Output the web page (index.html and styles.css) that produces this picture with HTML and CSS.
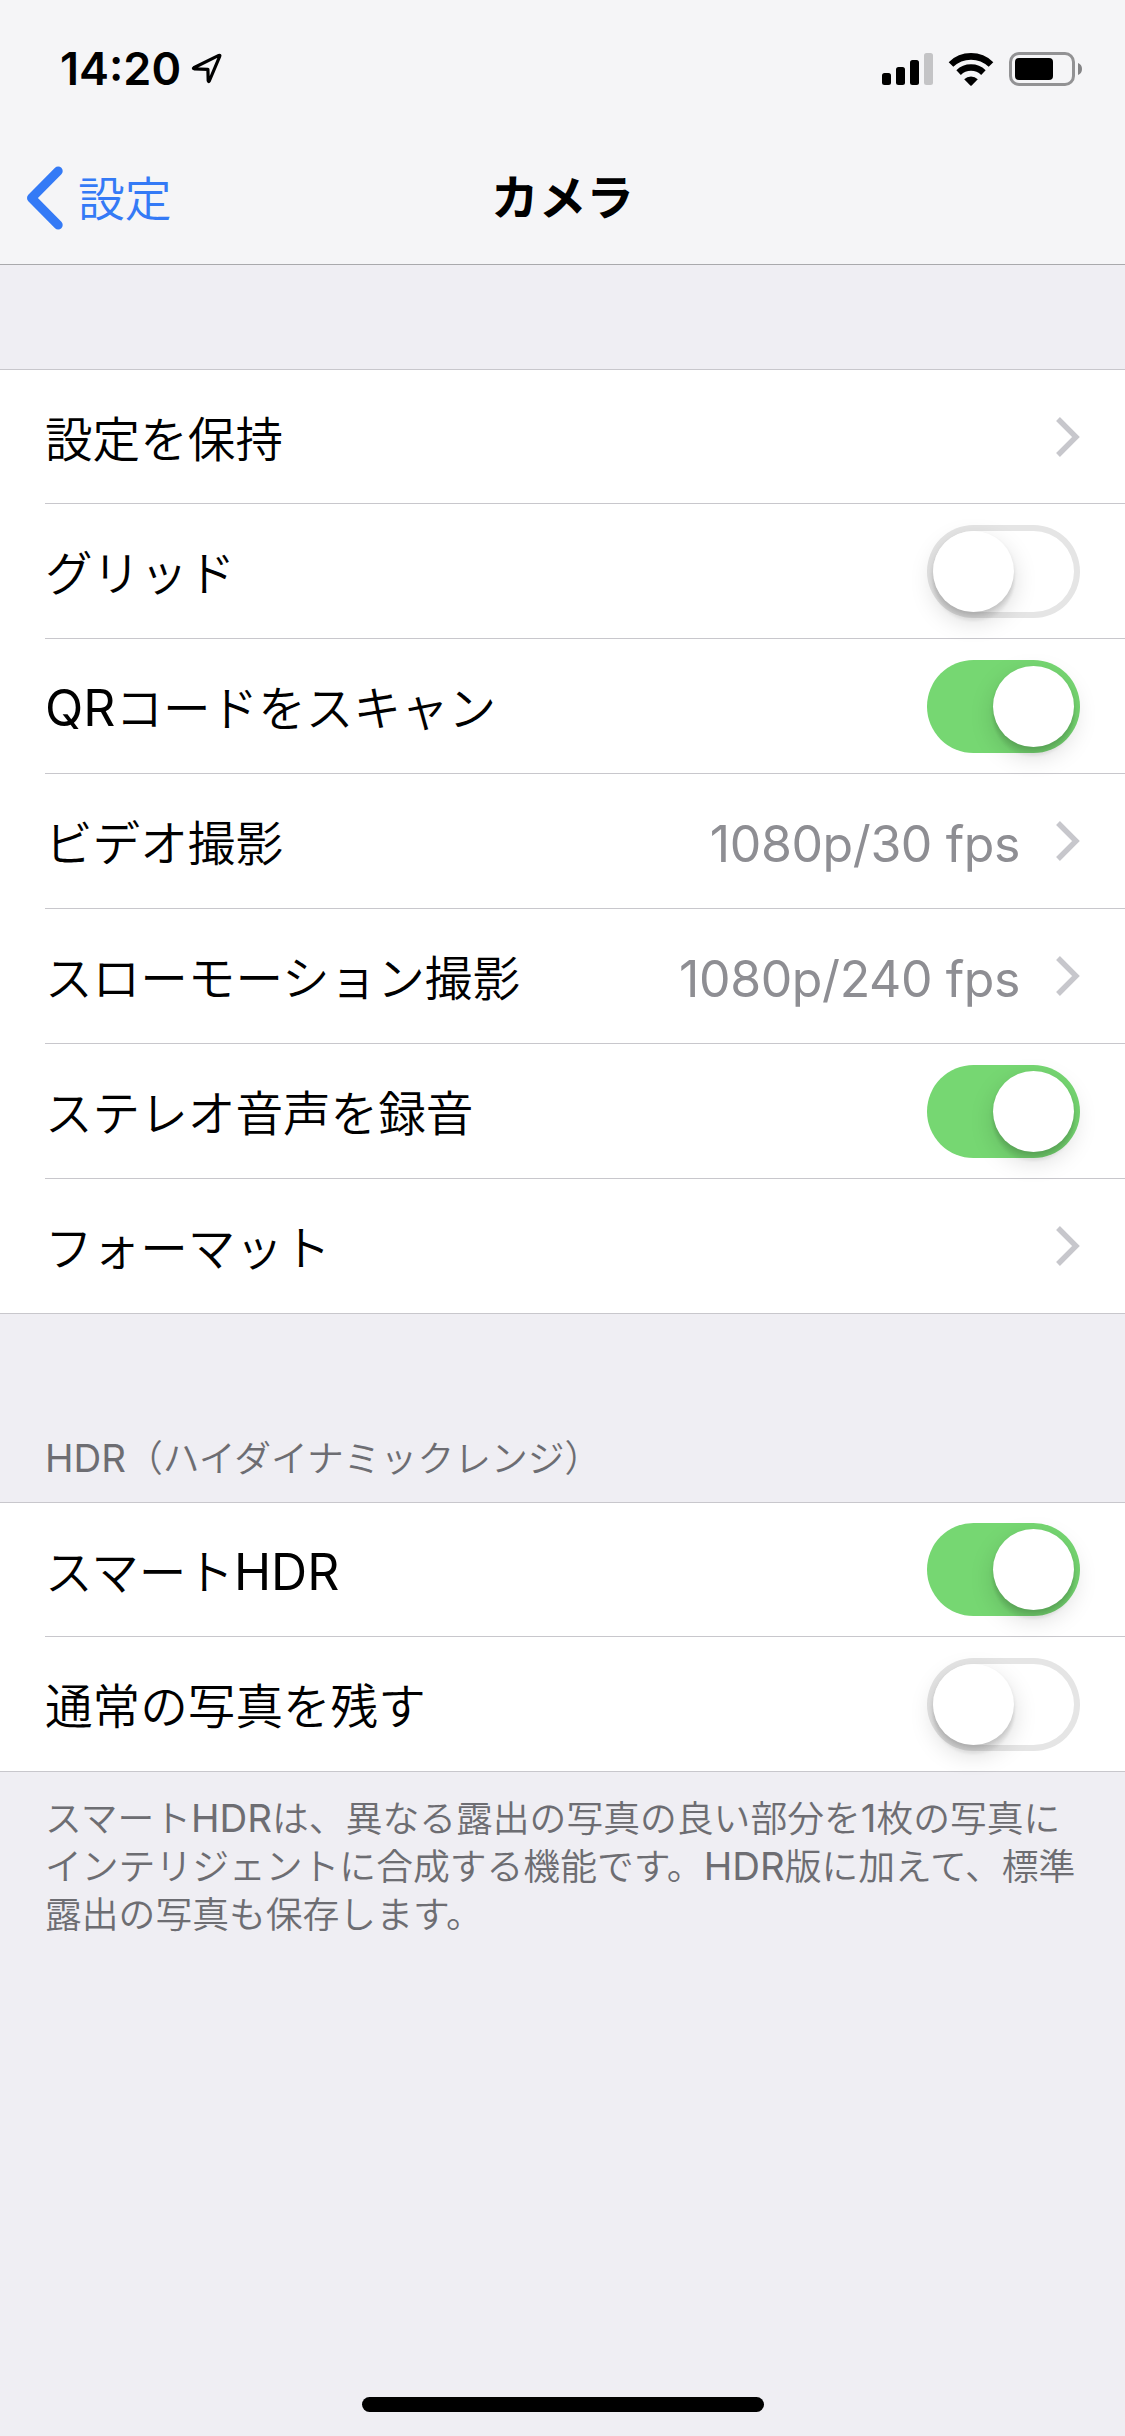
FILE: index.html
```
<!DOCTYPE html>
<html lang="ja">
<head>
    <meta charset="UTF-8">
    <meta name="viewport" content="width=device-width, initial-scale=1.0">
    <title>カメラ</title>
    <link rel="stylesheet" href="styles.css">
</head>
<body>
    <header class="header">
        <div class="status-bar">
            <div class="status-left">
                <span class="time">14:20</span>
                <svg class="location" width="32" height="32" viewBox="0 0 32 32">
                    <path d="M2.8 15.8 L27.8 3.4 Q29.4 2.8 28.7 4.4 L18.3 29 Q17.6 30.2 17.2 28.6 L16.9 17.4 L3.2 16.8 Q1.8 16.4 2.8 15.8 Z" fill="none" stroke="#000" stroke-width="3.2" stroke-linejoin="round"/>
                </svg>
            </div>
            <div class="status-right">
                <svg class="signal" width="51" height="32" viewBox="0 0 51 32">
                    <rect x="0" y="20" width="9" height="12" rx="2.5"/>
                    <rect x="14" y="14" width="9" height="18" rx="2.5"/>
                    <rect x="28" y="7" width="9" height="25" rx="2.5"/>
                    <rect x="42" y="0" width="9" height="32" rx="2.5" fill="#c4c4c6"/>
                </svg>
                <svg class="wifi" width="46" height="33" viewBox="0 0 46 33">
                    <path d="M3 11.5 A28.7 28.7 0 0 1 43 11.5" fill="none" stroke="#000" stroke-width="6.6"/>
                    <path d="M10.6 19.6 A17.7 17.7 0 0 1 35.4 19.6" fill="none" stroke="#000" stroke-width="6.4"/>
                    <path d="M16.2 26.3 A9.8 9.8 0 0 1 29.8 26.3 L23.7 32.4 Q23 33 22.3 32.4 Z"/>
                </svg>
                <svg class="battery" width="74" height="34" viewBox="0 0 74 34">
                    <rect x="1.5" y="1.5" width="63" height="31" rx="8.5" fill="none" stroke="#929294" stroke-width="3"/>
                    <rect x="6" y="6" width="38" height="22" rx="4"/>
                    <path d="M69 11 Q73 12.5 73 17 Q73 21.5 69 23 Z" fill="#848486"/>
                </svg>
            </div>
        </div>
        <nav class="nav-bar">
            <a class="back" href="#">
                <svg width="38" height="64" viewBox="0 0 38 64">
                    <path d="M32.2 5 L5.5 32 L32.2 59" fill="none" stroke="#347af6" stroke-width="9" stroke-linecap="round" stroke-linejoin="round"/>
                </svg>
                <span>設定</span>
            </a>
            <h1>カメラ</h1>
        </nav>
    </header>

    <main>
        <ul class="group">
            <li class="row">
                <span class="label">設定を保持</span>
                <svg class="chevron" width="24" height="40" viewBox="0 0 24 40"><path d="M2 2 L20 20 L2 38"/></svg>
            </li>
            <li class="row">
                <span class="label">グリッド</span>
                <span class="switch"></span>
            </li>
            <li class="row">
                <span class="label"><span class="latin">QR</span>コードをスキャン</span>
                <span class="switch on"></span>
            </li>
            <li class="row">
                <span class="label">ビデオ撮影</span>
                <span class="value">1080p/30 fps</span>
                <svg class="chevron" width="24" height="40" viewBox="0 0 24 40"><path d="M2 2 L20 20 L2 38"/></svg>
            </li>
            <li class="row">
                <span class="label">スローモーション撮影</span>
                <span class="value">1080p/240 fps</span>
                <svg class="chevron" width="24" height="40" viewBox="0 0 24 40"><path d="M2 2 L20 20 L2 38"/></svg>
            </li>
            <li class="row">
                <span class="label">ステレオ音声を録音</span>
                <span class="switch on"></span>
            </li>
            <li class="row">
                <span class="label">フォーマット</span>
                <svg class="chevron" width="24" height="40" viewBox="0 0 24 40"><path d="M2 2 L20 20 L2 38"/></svg>
            </li>
        </ul>

        <h2 class="group-title"><span class="latin">HDR</span>（ハイダイナミックレンジ）</h2>
        <ul class="group">
            <li class="row">
                <span class="label">スマート<span class="latin">HDR</span></span>
                <span class="switch on"></span>
            </li>
            <li class="row">
                <span class="label">通常の写真を残す</span>
                <span class="switch"></span>
            </li>
        </ul>
        <p class="group-note">スマート<span class="latin">HDR</span>は、異なる露出の写真の良い部分を<span class="latin">1</span>枚の写真に<br>インテリジェントに合成する機能です。<span class="latin">HDR</span>版に加えて、標準<br>露出の写真も保存します。</p>
    </main>

    <div class="home-indicator"></div>
</body>
</html>
```
FILE: styles.css
```
* {
    box-sizing: border-box;
}
body {
    margin: 0;
    height: 2436px;
    display: flex;
    flex-direction: column;
    background-color: #efeef3;
    color: #000;
    font-family: "Noto Sans CJK JP", sans-serif;
    font-size: 47.6px;
    font-weight: 350;
    overflow: hidden;
}
svg {
    display: block;
    flex-shrink: 0;
}
.latin, .time, .value {
    font-family: Inter, sans-serif;
    font-weight: 400;
}
.latin {
    line-height: 1;
}

/* header */
.header {
    height: 265px;
    background-color: #f5f5f7;
    border-bottom: 1px solid #a9a9ac;
}
.status-bar {
    height: 132px;
    padding: 6px 42px 0 60px;
    display: flex;
    justify-content: space-between;
    align-items: center;
}
.status-left, .status-right {
    display: flex;
    align-items: center;
}
.time {
    width: 131px;
    font-size: 45px;
    font-weight: 600;
    line-height: 60px;
    white-space: nowrap;
}
.location {
    margin-bottom: 2px;
}
.signal {
    margin-right: 15px;
}
.wifi {
    margin-right: 15px;
}
.nav-bar {
    height: 132px;
    padding: 0 26px;
    display: grid;
    grid-template-columns: 1fr auto 1fr;
    align-items: center;
}
.back {
    display: flex;
    align-items: center;
    gap: 14px;
    color: #347af6;
    font-size: 46.8px;
    line-height: 64px;
    text-decoration: none;
}
.back span {
    padding-bottom: 5px;
}
h1 {
    margin: 0;
    padding-bottom: 6px;
    font-size: 47.6px;
    font-weight: 700;
    line-height: 64px;
}

/* setting rows */
.group {
    margin: 0;
    padding: 0;
    list-style: none;
    background-color: #fff;
    border-top: 1px solid #c8c7cc;
    border-bottom: 1px solid #c8c7cc;
}
main .group:first-child {
    margin-top: 104px;
}
.row {
    height: 135px;
    margin-left: 45px;
    padding-right: 45px;
    display: flex;
    align-items: center;
    border-bottom: 1px solid #c8c7cc;
}
.row:first-child {
    height: 134px;
}
.row:last-child {
    height: 134px;
    border-bottom: none;
}
.label {
    flex: 1;
    line-height: 72px;
    white-space: nowrap;
}
.label .latin {
    font-size: 50px;
}
.value {
    padding-top: 6px;
    color: #8e8e93;
    font-size: 50px;
    letter-spacing: -0.4px;
    line-height: 72px;
    white-space: nowrap;
}
.chevron {
    margin-left: 36px;
}
.chevron path {
    fill: none;
    stroke: #c7c7cc;
    stroke-width: 5.4;
}
.switch {
    width: 153px;
    height: 93px;
    padding: 6px;
    display: flex;
    border-radius: 47px;
    box-shadow: inset 0 0 0 6px #e5e5e5;
}
.switch::before {
    content: "";
    width: 81px;
    height: 81px;
    border-radius: 50%;
    background-color: #fff;
    box-shadow: 0 9px 24px rgba(0, 0, 0, 0.15), 0 9px 3px rgba(0, 0, 0, 0.06), 0 3px 4px rgba(0, 0, 0, 0.1);
}
.switch.on {
    justify-content: flex-end;
    background-color: #76d772;
    box-shadow: none;
}

/* group texts */
.group-title {
    margin: 0;
    padding: 118px 45px 21px;
    color: #6d6d72;
    font-size: 36.8px;
    font-weight: 350;
    line-height: 49px;
    white-space: nowrap;
}
.group-title .latin, .group-note .latin {
    font-size: 38.4px;
}
.group-note {
    margin: 0;
    padding: 20px 45px;
    color: #6d6d72;
    font-size: 36.8px;
    line-height: 48px;
    white-space: nowrap;
}

.home-indicator {
    width: 402px;
    height: 15px;
    margin: auto auto 24px 362px;
    border-radius: 8px;
    background-color: #000;
}
```
